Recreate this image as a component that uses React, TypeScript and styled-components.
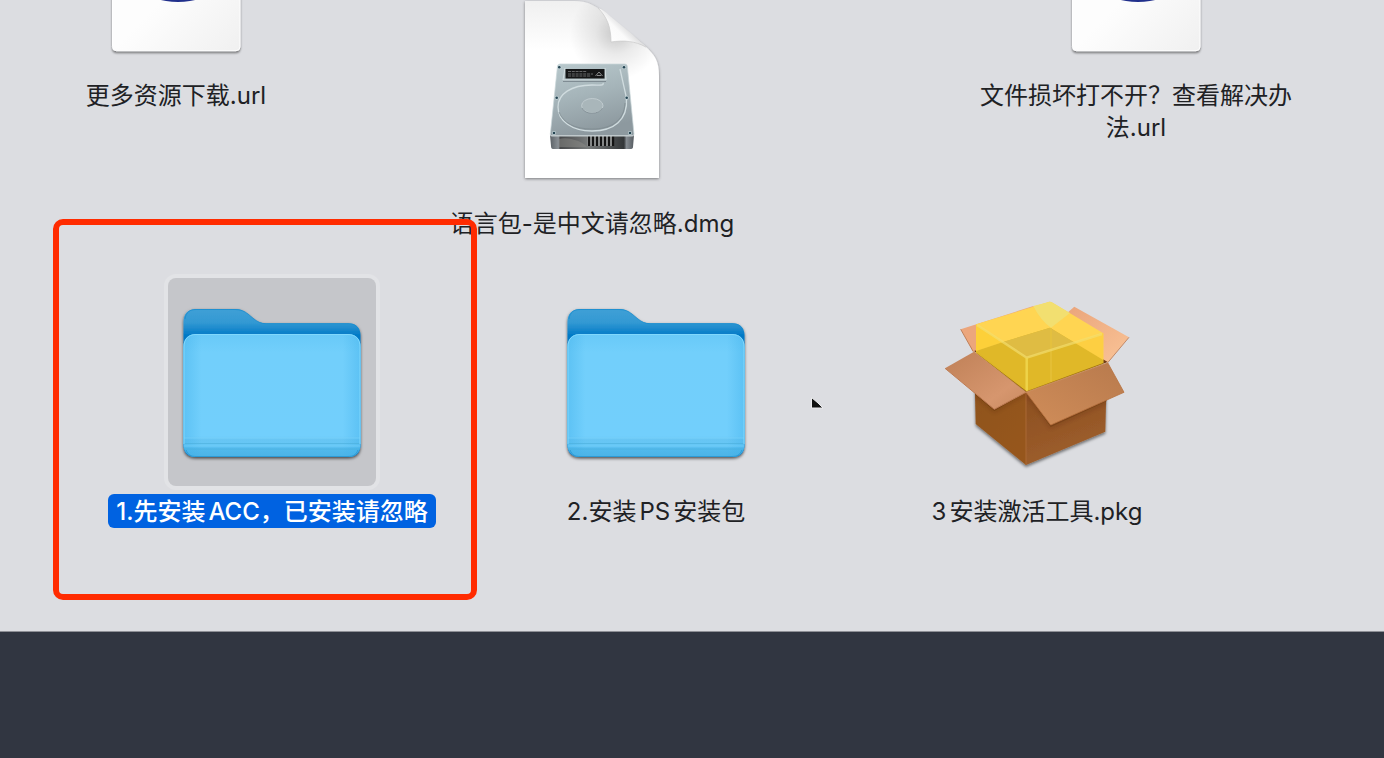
import React from "react";
import styled, { createGlobalStyle, css } from "styled-components";

const GlobalStyle = createGlobalStyle`
  * { box-sizing: border-box; }
  body {
    margin: 0;
    background: #313641;
    font-family: Inter, "Noto Sans CJK SC", sans-serif;
  }
`;

const Desktop = styled.main`
  display: flex;
  flex-direction: column;
  min-height: 100vh;
  background: #313641;
`;

const FinderWindow = styled.section`
  position: relative;
  flex: 1;
  overflow: hidden;
  background: #dcdde1;
  border-bottom: 1px solid #8e9096;
`;

const DesktopStrip = styled.footer`
  height: 126px;
  background: #313641;
`;

const FileCanvas = styled.ul`
  margin: 0;
  padding: 0;
  list-style: none;
`;

const FilePlace = styled.li<{ $x: number; $y: number }>`
  position: absolute;
  left: ${(p) => p.$x}px;
  top: ${(p) => p.$y}px;
  width: 336px;
`;

const FileButton = styled.button`
  display: flex;
  flex-direction: column;
  align-items: center;
  gap: 8px;
  width: 100%;
  padding: 0;
  border: 0;
  background: none;
  color: #202124;
  font: inherit;
  cursor: default;
`;

const IconSlot = styled.span<{ $selected?: boolean }>`
  display: block;
  width: 208px;
  height: 208px;
  border-radius: 8px;
  ${(p) =>
    p.$selected &&
    css`
      background: #c5c6ca;
      box-shadow: 0 0 0 4px #e2e3e6;
    `}
  svg {
    display: block;
    overflow: visible;
  }
`;

const FileName = styled.span<{ $selected?: boolean }>`
  padding: 2px 8px 0;
  border-radius: 6px;
  font-size: 24px;
  line-height: 32px;
  text-align: center;
  text-autospace: normal;
  ${(p) =>
    p.$selected &&
    css`
      background: #0062e1;
      color: #fff;
      font-weight: 500;
      white-space: nowrap;
    `}
`;

const Highlight = styled.div`
  position: absolute;
  left: 53px;
  top: 219px;
  width: 424px;
  height: 381px;
  border: 6px solid #ff2b00;
  border-radius: 10px;
  pointer-events: none;
`;

const Pointer = styled.svg`
  position: absolute;
  left: 808px;
  top: 394px;
`;

function UrlIcon() {
  return (
    <svg width="208" height="208" viewBox="0 0 208 208" aria-hidden="true">
      <defs>
        <linearGradient id="card" x1="0" y1="0" x2="1" y2="1">
          <stop offset="0.5" stopColor="#fdfdfd" />
          <stop offset="1" stopColor="#f0f0f0" />
        </linearGradient>
        <filter id="cardShadow" x="-10%" y="-10%" width="120%" height="120%">
          <feDropShadow dx="0" dy="2" stdDeviation="1.3" floodColor="#000" floodOpacity="0.45" />
        </filter>
      </defs>
      <rect x="40.5" y="60" width="127.5" height="128.7" rx="4" fill="url(#card)" stroke="#fff" filter="url(#cardShadow)" />
      <ellipse cx="106" cy="128" rx="31" ry="12" fill="#21308c" />
    </svg>
  );
}

function DiskImageIcon() {
  return (
    <svg width="208" height="208" viewBox="0 0 208 208" aria-hidden="true">
      <defs>
        <linearGradient id="page" x1="0" y1="0" x2="0" y2="1">
          <stop offset="0" stopColor="#f0f0f0" />
          <stop offset="0.28" stopColor="#fff" />
          <stop offset="1" stopColor="#fff" />
        </linearGradient>
        <radialGradient id="pageShade" gradientUnits="userSpaceOnUse" cx="128" cy="44" r="46">
          <stop offset="0" stopColor="#000" stopOpacity="0.2" />
          <stop offset="0.45" stopColor="#000" stopOpacity="0.08" />
          <stop offset="1" stopColor="#000" stopOpacity="0" />
        </radialGradient>
        <linearGradient id="curl" gradientUnits="userSpaceOnUse" x1="122" y1="54" x2="140" y2="36">
          <stop offset="0" stopColor="#fff" />
          <stop offset="0.6" stopColor="#fafafa" />
          <stop offset="1" stopColor="#d8d8d9" />
        </linearGradient>
        <linearGradient id="metal" x1="0" y1="0" x2="0.3" y2="1">
          <stop offset="0" stopColor="#b9c9cd" />
          <stop offset="0.5" stopColor="#a5b4b9" />
          <stop offset="1" stopColor="#8d999f" />
        </linearGradient>
        <linearGradient id="driveFront" x1="0" y1="0" x2="1" y2="0">
          <stop offset="0" stopColor="#5b6166" />
          <stop offset="0.1" stopColor="#8a9095" />
          <stop offset="0.12" stopColor="#47484a" />
          <stop offset="0.45" stopColor="#777a7a" />
          <stop offset="0.88" stopColor="#333638" />
          <stop offset="0.91" stopColor="#858b91" />
          <stop offset="1" stopColor="#555b60" />
        </linearGradient>
        <filter id="pageShadow" x="-10%" y="-10%" width="120%" height="120%">
          <feDropShadow dx="0" dy="1" stdDeviation="1.5" floodColor="#000" floodOpacity="0.45" />
        </filter>
      </defs>
      <g filter="url(#pageShadow)">
        <path d="M37 11H86C101 11 110 17 119 26L157 56C167 65 171 71 171 86V188H37Z" fill="url(#page)" />
      </g>
      <path d="M37 11H86C101 11 110 17 119 26L157 56C167 65 171 71 171 86V188H37Z" fill="url(#pageShade)" />
      <path d="M110 18C119 27 123 37 123 52C136 50 147 51 159 58L144 44L122 26C118 22 114 19 110 18Z" fill="url(#curl)" />
      <path d="M110 18C119 27 123 37 123 52C136 50 147 51 158 57" fill="none" stroke="#c8c8c9" strokeWidth="0.7" />

      <path d="M62 145H146L145 157Q145 159 142 159H65Q63 159 63 156Z" fill="url(#driveFront)" />
      <path d="M71 149C80 146 96 152 99 157H71Z" fill="#8b8b88" opacity="0.5" />
      <rect x="99" y="146" width="26" height="10" fill="#a2a5a5" />
      <path d="M101 146V156M105 146V156M109 146V156M113 146V156M117 146V156M121 146V156M125 146V156" stroke="#141414" strokeWidth="2.4" />
      <path d="M72 74H137Q139 74 139.3 76L146 144Q146 146 144 146H64Q62 146 62.3 144L69.5 76Q70 74 72 74Z" fill="url(#metal)" stroke="#c9d5d8" strokeWidth="0.7" />
      <path d="M62.5 145.7H145.5" stroke="#c7ced0" />
      <path d="M115 93C116 96 112 95 104 95C83 95 70 104 70 117C70 131 84 141 104 141C126 141 140 130 138.5 108L132 79" fill="none" stroke="#d0dcdf" strokeWidth="1.3" />
      <path d="M71 122C75 133 87 139 104 139C123 139 136 131 137 113" fill="none" stroke="#7f8b91" strokeWidth="0.8" />
      <ellipse cx="104.3" cy="115.7" rx="10.7" ry="7.2" fill="#a9b6ba" stroke="#c6d1d4" strokeWidth="0.8" />
      <path d="M94 118C97 125 111 125 114.5 118" fill="none" stroke="#7c898f" strokeWidth="0.8" />
      <path d="M77 78L75 90H118L117 78" fill="none" stroke="#d5dfe2" />
      <path d="M75 91.3H118" stroke="#738087" />
      <rect x="77.5" y="79" width="39" height="9.5" fill="#151617" />
      <path d="M80 81.5H99M80 84H105M80 86H103" stroke="#8b8d8e" strokeWidth="0.7" strokeDasharray="3 0.8" />
      <path d="M107.500 86L111 82L114.500 86M109 85.500H113" fill="none" stroke="#96999a" strokeWidth="0.9" />
      {[[71.3, 77.3], [136, 77.3], [68.7, 107.7], [138.7, 107.7], [66, 143], [142, 143]].map(([x, y]) => (
        <g key={`${x}-${y}`}>
          <circle cx={x} cy={y} r="2" fill="#c6d6da" />
          <circle cx={x} cy={y} r="1.3" fill="#254451" />
        </g>
      ))}
    </svg>
  );
}

function FolderIcon() {
  return (
    <svg width="208" height="208" viewBox="0 0 208 208" aria-hidden="true">
      <defs>
        <linearGradient id="folderBack" gradientUnits="userSpaceOnUse" x1="0" y1="31" x2="0" y2="58">
          <stop offset="0" stopColor="#3fa0d6" />
          <stop offset="0.5" stopColor="#3399d3" />
          <stop offset="1" stopColor="#0078c6" />
        </linearGradient>
        <linearGradient id="folderFront" gradientUnits="userSpaceOnUse" x1="0" y1="56" x2="0" y2="179">
          <stop offset="0" stopColor="#68c9f8" />
          <stop offset="0.15" stopColor="#72cffb" />
          <stop offset="0.83" stopColor="#72cffc" />
          <stop offset="0.86" stopColor="#67c5f3" />
          <stop offset="0.9" stopColor="#66c7f6" />
          <stop offset="0.94" stopColor="#51b9ec" />
          <stop offset="1" stopColor="#4bb3e7" />
        </linearGradient>
        <linearGradient id="folderSides" x1="0" y1="0" x2="1" y2="0">
          <stop offset="0" stopColor="#3caee9" stopOpacity="0.4" />
          <stop offset="0.1" stopColor="#3caee9" stopOpacity="0" />
          <stop offset="0.9" stopColor="#3caee9" stopOpacity="0" />
          <stop offset="1" stopColor="#3caee9" stopOpacity="0.4" />
        </linearGradient>
        <filter id="folderShadow" x="-10%" y="-10%" width="120%" height="120%">
          <feDropShadow dx="0" dy="1.5" stdDeviation="1.4" floodColor="#000" floodOpacity="0.65" />
        </filter>
      </defs>
      <g filter="url(#folderShadow)">
        <path d="M15.5 44C15.5 36 20 31 28 31H67C73 31 76 33 80 36L86 41C90 44 93 45.3 98 45.3H180C188 45.3 192.500 50 192.500 57V167C192.500 175 188 179 180 179H28C20 179 15.500 175 15.500 167Z" fill="url(#folderBack)" />
      </g>
      <path d="M17 41C18 34 22 31.5 28 31.5H67C73 31.5 76 33 80 36L86 41C90 44 93 45.7 98 45.7H180C185 45.7 189 47 191 52" fill="none" stroke="#188bce" strokeWidth="0.8" />
      <rect x="15.5" y="56" width="177" height="123" rx="12" fill="url(#folderFront)" />
      <rect x="15.5" y="56" width="177" height="123" rx="12" fill="url(#folderSides)" />
      <path d="M16 160H192M16 168H192" stroke="#7dd4fb" strokeWidth="1" opacity="0.6" />
      <path d="M16 165.5H192M16 171H192" stroke="#49add9" strokeWidth="1" opacity="0.55" />
      <path d="M16 166V69C16 61 20 56.5 28 56.5H180C188 56.5 192 61 192 69V166" fill="none" stroke="#80d8fd" strokeWidth="1" />
      <path d="M18 172C20 177 23 178.5 28 178.5H180C185 178.5 188 177 190 172" fill="none" stroke="#2d9bd5" />
    </svg>
  );
}

function PackageIcon() {
  return (
    <svg width="208" height="208" viewBox="0 0 208 208" aria-hidden="true">
      <defs>
        <linearGradient id="boxLeft" x1="0" y1="0" x2="0.6" y2="1">
          <stop offset="0" stopColor="#8d511c" />
          <stop offset="1" stopColor="#96571f" />
        </linearGradient>
        <linearGradient id="boxRight" x1="0" y1="0" x2="0.3" y2="1">
          <stop offset="0" stopColor="#85491c" />
          <stop offset="1" stopColor="#9d5e2c" />
        </linearGradient>
        <linearGradient id="flapLeft" x1="0" y1="0" x2="1" y2="1">
          <stop offset="0" stopColor="#bf8057" />
          <stop offset="0.7" stopColor="#d6966e" />
          <stop offset="1" stopColor="#c88a60" />
        </linearGradient>
        <linearGradient id="flapRight" x1="1" y1="0" x2="0" y2="1">
          <stop offset="0" stopColor="#b87a4d" />
          <stop offset="1" stopColor="#d08d59" />
        </linearGradient>
        <linearGradient id="flapBack" x1="0" y1="0" x2="1" y2="1">
          <stop offset="0" stopColor="#e8a178" />
          <stop offset="1" stopColor="#fac497" />
        </linearGradient>
        <filter id="boxShadow" x="-20%" y="-20%" width="140%" height="140%">
          <feDropShadow dx="0" dy="2" stdDeviation="1.8" floodColor="#000" floodOpacity="0.5" />
        </filter>
        <filter id="flapShadow" x="-20%" y="-20%" width="140%" height="140%">
          <feDropShadow dx="0" dy="2" stdDeviation="2" floodColor="#3c1b02" floodOpacity="0.4" />
        </filter>
        <clipPath id="boxBody">
          <path d="M41 72L117 48L175 83L173 154L93 187.5L42.7 146Z" />
        </clipPath>
      </defs>
      <path d="M27.7 51.3L100.3 28L117 49.7L40.3 73.7Z" fill="#eca67c" />
      <path d="M141.3 28.7L196 59.3L174.7 84.7L117 49.7Z" fill="url(#flapBack)" />
      <path d="M196 59.3L174.7 84.7" stroke="#c28a69" />
      <path d="M27.7 51.3L40.3 73.7" stroke="#bf8059" />
      <path d="M41 73L117 49.7L174.7 84L93 115Z" fill="#713d15" />

      <g filter="url(#boxShadow)">
        <path d="M41 74L93 114.5V187L42.7 146Z" fill="url(#boxLeft)" />
        <path d="M93 114.5L174 85L172.3 153.7L93 187Z" fill="url(#boxRight)" />
      </g>
      <path d="M93 115V187" stroke="#aa6934" strokeWidth="1" />

      <path d="M43 46.3L114 24.5Q117 23 120 25L170.3 55.3V85.3L93.7 113.7L43 75.3Z" fill="#ffd552" />
      <path d="M100.3 28L114 24.5Q117 23 120 25L137 35L118 49.7Q108 43 100.3 28Z" fill="#f2df70" />
      <path d="M43 46.3L70 64L43 73Z" fill="#fdd039" />
      <path d="M141.3 64.5L170.3 55.3V82Z" fill="#fdcf42" />
      <path d="M43 73L70 64L117 49.7L170.3 82V85.3L93.7 113.7L43 75.3Z" fill="#e0b828" />
      <path d="M70 64L117 49.7L141.3 64.5L93.7 79.7Z" fill="#dfbc43" />
      <path d="M118 50V104" stroke="#e8c33c" strokeWidth="2" opacity="0.6" />
      <path d="M44 47L93.7 79.7L169 56" fill="none" stroke="#f3df70" strokeWidth="2.5" opacity="0.65" />
      <path d="M93.7 80V113" stroke="#f1d84f" strokeWidth="2.5" opacity="0.85" />
      <path d="M43.5 75.5L93.7 113.7L170 85.5" fill="none" stroke="#a97a10" strokeWidth="1" />

      <g clipPath="url(#boxBody)" opacity="0.45" filter="url(#flapShadow)">
        <path d="M41 74L93 114.5L61.3 133L12 90Z" fill="#5a2b08" />
        <path d="M93 114.5L174.7 85L191 115L117.7 149Z" fill="#5a2b08" />
      </g>
      <path d="M41 73.7L93 114.3L61.3 131.3L12 90.3Z" fill="url(#flapLeft)" />
      <path d="M12 90.3L61.3 131.3L93 114.3" fill="none" stroke="#bf7c54" strokeWidth="1" />
      <path d="M93 114.3L174.7 84.7L191 114.3L117.7 147Z" fill="url(#flapRight)" />
      <path d="M93 114.3L117.7 147L191 114.3L174.7 84.7" fill="none" stroke="#b8713e" strokeWidth="0.8" />
      <path d="M93 114.3L174.7 84.7M41 73.7L93 114.3" stroke="#d49b6f" strokeWidth="0.7" />
    </svg>
  );
}

const files = [
  { name: "更多资源下载.url", Icon: UrlIcon, x: 8, y: -138 },
  { name: "语言包-是中文请忽略.dmg", Icon: DiskImageIcon, x: 424, y: -10 },
  { name: "文件损坏打不开？查看解决办法.url", Icon: UrlIcon, x: 968, y: -138 },
  { name: "1.先安装ACC，已安装请忽略", Icon: FolderIcon, x: 104, y: 278, selected: true },
  { name: "2.安装PS安装包", Icon: FolderIcon, x: 488, y: 278 },
  { name: "3安装激活工具.pkg", Icon: PackageIcon, x: 869, y: 278 },
];

export default function App() {
  return (
    <Desktop>
      <GlobalStyle />
      <FinderWindow aria-label="Finder">
        <FileCanvas>
          {files.map(({ name, Icon, x, y, selected }) => (
            <FilePlace key={name} $x={x} $y={y}>
              <FileButton type="button" aria-pressed={!!selected}>
                <IconSlot $selected={selected}>
                  <Icon />
                </IconSlot>
                <FileName $selected={selected}>{name}</FileName>
              </FileButton>
            </FilePlace>
          ))}
        </FileCanvas>
        <Highlight />
        <Pointer width="20" height="18" viewBox="0 0 20 18" aria-hidden="true">
          <path d="M3.5 3.5L10 9L15 14H3.5Z" fill="#111" stroke="#ececee" strokeWidth="1" />
        </Pointer>
      </FinderWindow>
      <DesktopStrip />
    </Desktop>
  );
}
